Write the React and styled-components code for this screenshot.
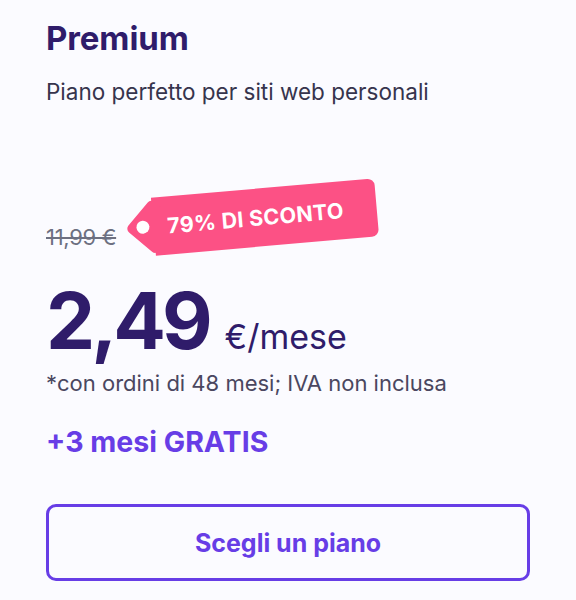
import React from 'react'
import styled, { createGlobalStyle } from 'styled-components'

const GlobalStyle = createGlobalStyle`
  body {
    margin: 0;
    background: #fbfbff;
    font-family: 'Inter', 'Noto Sans', sans-serif;
  }
`

const Card = styled.div`
  width: 576px;
  height: 600px;
  box-sizing: border-box;
  padding: 18px 46px 0 46px;
  background: #fbfbff;
  color: #2f1c6a;
`

const Title = styled.h2`
  margin: 0;
  font-size: 33px;
  font-weight: 700;
  line-height: 40px;
  letter-spacing: -0.1px;
`

const Subtitle = styled.p`
  margin: 19px 0 0;
  font-size: 22.5px;
  line-height: 30px;
  color: #36344d;
`

const OldRow = styled.div`
  display: flex;
  align-items: center;
  margin-top: 110px;
  height: 40px;
`

const OldPrice = styled.span`
  font-size: 22px;
  color: #6d7081;
  text-decoration: line-through;
  letter-spacing: -0.3px;
`

const Tag = styled.div`
  position: relative;
  z-index: 0;
  margin-left: 37px;
  margin-top: -40px;
  height: 58px;
  width: 224px;
  display: flex;
  align-items: center;
  padding-left: 14px;
  box-sizing: border-box;
  background: #fc5185;
  border-radius: 0 7px 7px 0;
  transform: rotate(-5deg);
  color: #fff;
  font-size: 21.5px;
  font-weight: 700;
  letter-spacing: 0.3px;

  &::before {
    content: '';
    position: absolute;
    z-index: -1;
    left: -20px;
    top: 9px;
    width: 40px;
    height: 40px;
    background: #fc5185;
    border-radius: 5px;
    transform: rotate(45deg);
  }
`

const Hole = styled.span`
  position: absolute;
  left: -17px;
  top: 22px;
  width: 13px;
  height: 13px;
  border-radius: 50%;
  background: #fff;
`

const PriceRow = styled.div`
  display: flex;
  align-items: baseline;
  gap: 16px;
  margin-top: 25px;
`

const Price = styled.span`
  font-size: 78px;
  font-weight: 700;
  line-height: 78px;
  letter-spacing: -4px;
`

const Unit = styled.span`
  font-size: 34px;
  color: #2f1c6a;
`

const Note = styled.p`
  margin: 8px 0 0;
  font-size: 22px;
  line-height: 30px;
  color: #4a4760;
`

const Bonus = styled.p`
  margin: 27px 0 0;
  font-size: 28.5px;
  line-height: 34px;
  font-weight: 700;
  color: #673de6;
`

const ChooseButton = styled.button`
  display: block;
  margin-top: 45px;
  width: 484px;
  height: 77px;
  border: 3px solid #673de6;
  border-radius: 10px;
  background: transparent;
  color: #673de6;
  font-family: inherit;
  font-size: 25px;
  font-weight: 700;
  cursor: pointer;
`

export default function App() {
  return (
    <>
      <GlobalStyle />
      <Card>
        <Title>Premium</Title>
        <Subtitle>Piano perfetto per siti web personali</Subtitle>
        <OldRow>
          <OldPrice>11,99 €</OldPrice>
          <Tag>
            <Hole />
            79% DI SCONTO
          </Tag>
        </OldRow>
        <PriceRow>
          <Price>2,49</Price>
          <Unit>€/mese</Unit>
        </PriceRow>
        <Note>*con ordini di 48 mesi; IVA non inclusa</Note>
        <Bonus>+3 mesi GRATIS</Bonus>
        <ChooseButton>Scegli un piano</ChooseButton>
      </Card>
    </>
  )
}
